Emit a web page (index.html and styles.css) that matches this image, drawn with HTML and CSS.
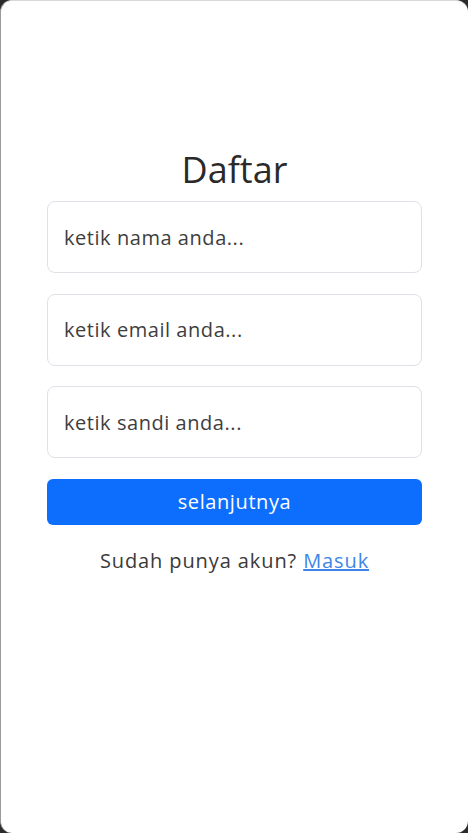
FILE: index.html
```html
<!DOCTYPE html>
<html lang="id">
<head>
<meta charset="utf-8">
<title>Daftar</title>
<link rel="stylesheet" href="styles.css">
</head>
<body>
<div class="card">
  <form class="form">
    <h1 class="title">Daftar</h1>
    <input class="field" type="text" placeholder="ketik nama anda...">
    <input class="field" type="email" placeholder="ketik email anda...">
    <input class="field" type="password" placeholder="ketik sandi anda...">
    <button class="btn" type="button">selanjutnya</button>
    <p class="note">Sudah punya akun? <a class="link" href="#">Masuk</a></p>
  </form>
</div>
</body>
</html>
```

FILE: styles.css
```css
html, body {
  margin: 0;
  padding: 0;
  background: #2b2b2b;
}
.card {
  box-sizing: border-box;
  width: 468px;
  height: 833px;
  background: #fff;
  border-radius: 12px;
  border-top: 1px solid #d8d8d8;
  border-left: 1px solid #9a9a9a;
  font-family: "Open Sans", sans-serif;
  color: #333;
  padding-top: 146px;
}
.form {
  width: 375px;
  margin-left: 46px;
  display: flex;
  flex-direction: column;
}
.title {
  margin: 0 0 9px;
  font-weight: 400;
  font-size: 36px;
  line-height: 45px;
  text-align: center;
  color: #2a2a2a;
}
.field {
  box-sizing: border-box;
  height: 72px;
  margin-bottom: 20.6px;
  border: 1px solid #dee2e6;
  border-radius: 8px;
  padding: 0 16px;
  font-family: inherit;
  font-size: 20px;
  letter-spacing: 0.55px;
  color: #333;
  background: #fff;
  outline: none;
}
.field::placeholder {
  color: #3e3e3e;
  opacity: 1;
}
.btn {
  height: 46px;
  border: none;
  border-radius: 6px;
  background: #0d6efd;
  color: #fff;
  font-family: inherit;
  font-size: 20px;
  letter-spacing: 0.6px;
  margin-top: 0;
}
.note {
  margin: 22px 0 0;
  text-align: center;
  font-size: 20px;
  letter-spacing: 0.9px;
  line-height: 28px;
  color: #3a3a3a;
}
.link {
  color: #3d86e8;
  text-decoration: underline;
}
```
